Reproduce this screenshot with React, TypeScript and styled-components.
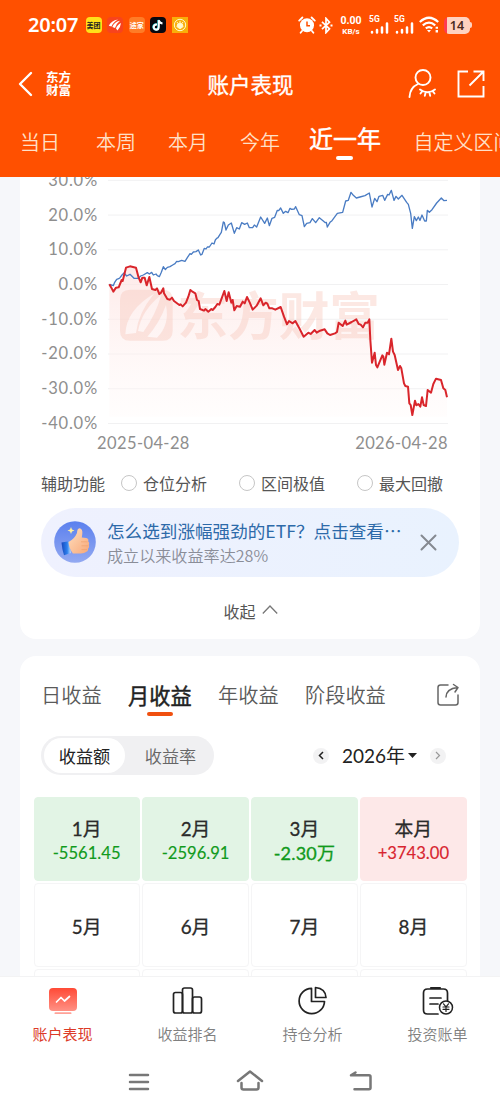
import React from 'react';
import styled, { createGlobalStyle } from 'styled-components';

const GlobalStyle = createGlobalStyle`
  * { box-sizing: border-box; }
  body {
    margin: 0;
    background: #f6f7fa;
    font-family: 'Noto Sans CJK SC', sans-serif;
    color: #2b2b2b;
    overflow: hidden;
  }
  svg { display: block; flex: none; }
`;

const Screen = styled.div`
  width: 500px;
  height: 1111px;
  display: flex;
  flex-direction: column;
  overflow: hidden;
`;

/* ---------- header ---------- */

const Header = styled.header`
  flex: none;
  height: 177px;
  background: #ff5000;
  color: #fff;
  display: flex;
  flex-direction: column;
`;

const StatusBar = styled.div`
  height: 50px;
  padding: 0 28px 0 28px;
  display: flex;
  align-items: center;
  justify-content: space-between;
`;

const StatusGroup = styled.div<{ $gap: number }>`
  display: flex;
  align-items: center;
  gap: ${(p) => p.$gap}px;
`;

const Clock = styled.span`
  font: 600 20px/24px 'Noto Sans', sans-serif;
  width: 51px;
  letter-spacing: -0.2px;
  margin-right: 1px;
`;

const AppBadge = styled.span<{ $bg: string; $color?: string; $square?: boolean }>`
  width: 16px;
  height: 16px;
  border-radius: ${(p) => (p.$square ? 0 : 4)}px;
  background: ${(p) => p.$bg};
  color: ${(p) => p.$color || '#fff'};
  font-size: 7px;
  line-height: 16px;
  font-weight: 700;
  text-align: center;
  display: flex;
  align-items: center;
  justify-content: center;
  white-space: nowrap;
`;

const NetSpeed = styled.div`
  display: flex;
  flex-direction: column;
  align-items: center;
  font: 700 8px/9px Roboto, sans-serif;
  width: 22px;
  margin: 0 4px 0 4px;
  span:first-child {
    font-size: 10.5px;
    line-height: 12px;
  }
`;

const TitleBar = styled.div`
  height: 68px;
  padding: 0 15px 0 18px;
  display: grid;
  grid-template-columns: 1fr auto 1fr;
  align-items: center;
`;

const TitleSide = styled.div<{ $end?: boolean }>`
  display: flex;
  align-items: center;
  justify-content: ${(p) => (p.$end ? 'flex-end' : 'flex-start')};
  gap: ${(p) => (p.$end ? 20 : 13)}px;
`;

const Brand = styled.span`
  font-weight: 700;
  font-size: 12.5px;
  line-height: 13.5px;
  width: 26px;
  margin-top: -2px;
`;

const Title = styled.h1`
  margin: 0 2px 0 0;
  font-size: 21.5px;
  line-height: 30px;
  font-weight: 400;
  -webkit-text-stroke: 0.35px currentColor;
`;

const PeriodTabs = styled.nav`
  height: 59px;
  padding: 0 0 0 20px;
  display: flex;
  white-space: nowrap;
`;

const PeriodTab = styled.span<{ $active?: boolean; $w: number }>`
  flex: none;
  width: ${(p) => p.$w}px;
  font-size: ${(p) => (p.$active ? 24 : 20)}px;
  line-height: ${(p) => (p.$active ? 40 : 47)}px;
  font-weight: ${(p) => (p.$active ? 400 : 350)};
  -webkit-text-stroke: ${(p) => (p.$active ? 0.45 : 0)}px currentColor;
  color: ${(p) => (p.$active ? '#fff' : '#ffe0c8')};
  &::after {
    content: '';
    display: ${(p) => (p.$active ? 'block' : 'none')};
    width: 17px;
    height: 4px;
    margin: -2px 0 0 27px;
    border-radius: 2px;
    background: #fff;
  }
`;

/* ---------- cards ---------- */

const Content = styled.main`
  flex: 1;
  min-height: 0;
  overflow: hidden;
  padding: 0 20px;
  display: flex;
  flex-direction: column;
  gap: 17px;
`;

const Card = styled.section<{ $h: number; $first?: boolean }>`
  flex: none;
  height: ${(p) => p.$h}px;
  background: #fff;
  border-radius: ${(p) => (p.$first ? '0 0 16px 16px' : '16px 16px 0 0')};
  overflow: hidden;
`;

const ChartRow = styled.div`
  display: flex;
  height: 248px;
`;

const YAxis = styled.div`
  width: 78px;
  margin-top: -14px;
  margin-right: 10px;
  display: flex;
  flex-direction: column;
  text-align: right;
`;

const AxisText = styled.span<{ $spacing?: number }>`
  font: 400 16.5px/34.7px Lato, sans-serif;
  height: 34.7px;
  letter-spacing: ${(p) => p.$spacing ?? 0.4}px;
  color: #8e8e8e;
`;

const XAxis = styled.div`
  display: flex;
  justify-content: space-between;
  padding: 0 32px 0 77px;
  margin-top: 1px;
`;

const ToolRow = styled.div`
  height: 24px;
  margin-top: 10px;
  padding-left: 21px;
  display: flex;
  align-items: center;
  font-size: 16px;
  line-height: 24px;
  color: #555;
`;

const Option = styled.label<{ $ml: number }>`
  display: flex;
  align-items: center;
  gap: 6px;
  margin-left: ${(p) => p.$ml}px;
`;

const Radio = styled.i`
  width: 16px;
  height: 16px;
  border: 1.3px solid #c6c6c6;
  border-radius: 50%;
`;

const Banner = styled.div`
  margin: 13px 21px 0;
  height: 69px;
  border-radius: 35px;
  background: linear-gradient(90deg, #eff1fe, #e9f2fe);
  padding: 0 22px 0 13px;
  display: flex;
  align-items: center;
`;

const BannerText = styled.div`
  margin-left: 11px;
  padding-top: 1px;
  flex: 1;
  display: flex;
  flex-direction: column;
  white-space: nowrap;
`;

const BannerTitle = styled.span`
  font-size: 17.6px;
  line-height: 25px;
  color: #2d6aa9;
`;

const BannerSub = styled.span`
  font-size: 16.1px;
  line-height: 24px;
  font-weight: 350;
  color: #8a8d98;
`;

const Collapse = styled.div`
  margin-top: 22px;
  display: flex;
  align-items: center;
  justify-content: center;
  gap: 6px;
  padding-left: 1px;
  font-size: 16px;
  line-height: 24px;
  color: #555;
`;

/* ---------- earnings card ---------- */

const EarnTabs = styled.div`
  height: 56px;
  padding: 23px 20px 0 21px;
  display: flex;
  justify-content: space-between;
`;

const EarnTabList = styled.div`
  display: flex;
`;

const EarnTab = styled.span<{ $active?: boolean; $w: number }>`
  width: ${(p) => p.$w}px;
  font-size: ${(p) => (p.$active ? 21.2 : 20.2)}px;
  line-height: 32px;
  font-weight: ${(p) => (p.$active ? 400 : 350)};
  -webkit-text-stroke: ${(p) => (p.$active ? 0.45 : 0)}px currentColor;
  color: ${(p) => (p.$active ? '#222' : '#5a5a5a')};
  white-space: nowrap;
  &::after {
    content: '';
    display: ${(p) => (p.$active ? 'block' : 'none')};
    width: 26px;
    height: 4px;
    margin: 1px 0 0 19px;
    border-radius: 2px;
    background: #f0500f;
  }
`;

const ShareIcon = styled.svg`
  margin-top: 4px;
`;

const Controls = styled.div`
  margin-top: 24px;
  padding: 0 34px 0 21px;
  display: flex;
  align-items: center;
  justify-content: space-between;
`;

const Segmented = styled.div`
  width: 173px;
  height: 39px;
  padding: 2px 3px;
  border-radius: 20px;
  background: #f0f0f2;
  display: flex;
`;

const Segment = styled.span<{ $active?: boolean }>`
  flex: ${(p) => (p.$active ? '0 0 81px' : '1')};
  border-radius: 18px;
  background: ${(p) => (p.$active ? '#fff' : 'transparent')};
  color: ${(p) => (p.$active ? '#222' : '#666')};
  font-size: 17.2px;
  line-height: 36px;
  padding-left: ${(p) => (p.$active ? 0 : 5)}px;
  font-weight: ${(p) => (p.$active ? 400 : 350)};
  text-align: center;
`;

const YearPicker = styled.div`
  display: flex;
  align-items: center;
`;

const RoundButton = styled.span`
  width: 16px;
  height: 16px;
  border-radius: 50%;
  background: #f2f2f3;
  display: flex;
  align-items: center;
  justify-content: center;
`;

const Year = styled.span`
  margin: 0 13px 0 13px;
  display: flex;
  align-items: center;
  gap: 3px;
  font: 400 19px/28px Lato, 'Noto Sans CJK SC', sans-serif;
  color: #222;
`;

const MonthGrid = styled.div`
  margin: 22px 13.5px 0;
  display: grid;
  grid-template-columns: repeat(4, 1fr);
  grid-auto-rows: 84px;
  gap: 2px 2.7px;
`;

type Tone = 'loss' | 'gain' | 'none';
const toneBg = { loss: '#e2f4e5', gain: '#fde8e8', none: '#fff' };

const MonthCell = styled.div<{ $tone: Tone }>`
  border-radius: 4px;
  background: ${(p) => toneBg[p.$tone]};
  border: 1px solid ${(p) => (p.$tone === 'none' ? '#f5f5f6' : toneBg[p.$tone])};
  padding-top: 2px;
  display: flex;
  flex-direction: column;
  align-items: center;
  justify-content: center;
`;

const MonthName = styled.span`
  font: 400 18.8px/25px Lato, 'Noto Sans CJK SC', sans-serif;
  -webkit-text-stroke: 0.3px currentColor;
  color: #2a2a2a;
`;

const MonthValue = styled.span<{ $tone: Tone; $big?: boolean }>`
  font: 400 ${(p) => (p.$big ? 18 : 16.6)}px/24px Lato, 'Noto Sans CJK SC', sans-serif;
  -webkit-text-stroke: ${(p) => (p.$big ? 0.35 : 0.15)}px currentColor;
  color: ${(p) => (p.$tone === 'loss' ? '#119a1c' : '#d8242f')};
  letter-spacing: ${(p) => (p.$big ? 0.2 : 0)}px;
`;

/* ---------- bottom ---------- */

const BottomBar = styled.nav`
  flex: none;
  height: 76px;
  background: #fff;
  border-top: 1px solid #f3f3f4;
  display: grid;
  grid-template-columns: repeat(4, 1fr);
`;

const BottomItem = styled.div<{ $active?: boolean }>`
  padding-top: 8px;
  display: flex;
  flex-direction: column;
  align-items: center;
  gap: 6px;
  font-size: 15px;
  line-height: 22px;
  font-weight: ${(p) => (p.$active ? 400 : 350)};
  color: ${(p) => (p.$active ? '#dc3a28' : '#808080')};
`;

const SystemBar = styled.div`
  flex: none;
  height: 59px;
  padding: 0 127px 0 127px;
  background: #fff;
  display: flex;
  justify-content: space-between;
`;

/* ---------- data ---------- */

const BENCHMARK =
  '268,328 274,330 280,332 284,322 290,313 296,311 300,308 306,300 312,294 320,303 330,298 336,304 342,310 355,310 362,303 370,300 382,293 388,297 395,292 400,300 408,297 412,302 418,305 424,292 430,275 436,284 442,277 450,275 458,270 465,266 470,259 475,260 485,256 495,259 502,248 510,236 514,238 520,231 528,230 535,225 542,240 546,238 553,220 558,222 562,216 568,216 576,204 582,207 586,195 590,190 594,188 600,178 604,172 610,141 613,143 618,165 625,150 634,144 643,175 650,158 658,162 665,143 674,148 682,144 688,158 698,158 703,150 710,156 722,126 734,145 742,129 748,152 756,130 764,127 772,106 776,107 782,99 790,115 797,109 804,113 810,100 815,103 823,102 827,95 838,119 846,122 853,155 860,145 870,143 877,131 887,143 898,128 909,137 916,143 919,142 922,156 930,142 936,137 952,115 968,112 977,78 985,76 993,52 1000,61 1009,69 1020,66 1035,62 1048,54 1056,96 1064,70 1071,80 1077,64 1088,61 1094,76 1103,58 1107,60 1114,46 1122,76 1128,64 1135,72 1146,61 1160,82 1165,88 1172,115 1177,160 1183,125 1189,137 1195,126 1200,136 1206,120 1214,138 1219,138 1222,106 1228,112 1236,104 1250,84 1264,69 1272,77 1281,76';

const ACCOUNT =
  '268,328 274,338 280,350 288,338 296,337 305,315 308,318 318,278 330,274 348,278 356,308 362,322 367,308 374,308 380,331 388,306 396,342 406,345 411,340 418,357 423,353 430,340 432,355 442,372 450,374 456,368 462,378 478,390 482,388 488,394 498,383 505,365 511,345 516,349 526,355 531,375 536,378 540,402 552,407 556,402 565,410 574,402 578,405 586,396 592,387 598,389 605,370 613,348 620,378 626,352 634,383 638,375 643,406 650,393 660,395 668,380 674,385 681,366 689,382 698,404 710,392 722,370 730,391 737,383 742,386 748,400 757,400 766,404 782,396 792,425 801,448 807,438 818,445 826,438 838,460 851,485 865,473 872,477 884,465 890,473 900,467 914,463 922,475 930,480 945,475 951,471 956,443 968,453 976,437 980,449 995,441 1009,433 1016,447 1022,449 1029,457 1036,443 1043,443 1048,433 1051,495 1056,563 1064,533 1068,570 1072,577 1087,541 1090,545 1093,569 1101,533 1107,538 1114,491 1119,530 1124,540 1134,585 1140,573 1144,580 1152,625 1156,633 1164,635 1168,685 1172,690 1177,720 1185,677 1189,691 1195,687 1201,695 1206,667 1211,690 1218,693 1223,645 1233,653 1240,627 1248,611 1263,615 1270,640 1276,645 1281,667';

const LEVELS = ['30.0%', '20.0%', '10.0%', '0.0%', '-10.0%', '-20.0%', '-30.0%', '-40.0%'];

const MONTHS: { name?: string; value?: string; tone: Tone; big?: boolean }[] = [
  { name: '1月', value: '-5561.45', tone: 'loss' },
  { name: '2月', value: '-2596.91', tone: 'loss' },
  { name: '3月', value: '-2.30万', tone: 'loss', big: true },
  { name: '本月', value: '+3743.00', tone: 'gain' },
  { name: '5月', tone: 'none' },
  { name: '6月', tone: 'none' },
  { name: '7月', tone: 'none' },
  { name: '8月', tone: 'none' },
  { tone: 'none' },
  { tone: 'none' },
  { tone: 'none' },
  { tone: 'none' },
];

/* ---------- drawings ---------- */

const Chart = () => (
  <svg width="340" height="248" viewBox="264 6 1020 744">
    <defs>
      <linearGradient id="area" x1="0" y1="274" x2="0" y2="725" gradientUnits="userSpaceOnUse">
        <stop offset="0" stopColor="#fde3e1" stopOpacity=".75" />
        <stop offset="1" stopColor="#fff8f7" stopOpacity=".3" />
      </linearGradient>
    </defs>
    {LEVELS.map((l, i) => (
      <line key={l} x1="264" x2="1284" y1={16 + i * 104.2} y2={16 + i * 104.2} stroke="#f1f1f2" strokeWidth="3" />
    ))}
    <polygon points={`268,725 ${ACCOUNT} 1281,725`} fill="url(#area)" />
    <g fill="#f8c9bd" opacity=".42">
      <path
        fillRule="evenodd"
        d="M330 344h98q30 0 30 30v93q0 30-30 30h-98q-30 0-30-30v-93q0-30 30-30ZM316 478Q318 405 402 356Q354 415 348 474ZM354 468Q365 405 424 359Q407 420 370 471ZM382 485Q417 447 438 390Q450 450 411 488Z"
      />
      <text x="472" y="479" fontSize="152" fontWeight="700" fontFamily="'Noto Sans CJK SC', sans-serif">
        东方财富
      </text>
    </g>
    <polyline points={BENCHMARK} fill="none" stroke="#4a7cc3" strokeWidth="4" strokeLinejoin="round" />
    <polyline points={ACCOUNT} fill="none" stroke="#d9252b" strokeWidth="6" strokeLinejoin="round" />
  </svg>
);

const Alarm = () => (
  <svg width="18" height="18" viewBox="0 0 18 18">
    <circle cx="9" cy="9.3" r="7" fill="#fff" />
    <path d="M1.2 4.6 4.4 1.5M16.8 4.6 13.6 1.5M4 15l-1.4 1.8M14 15l1.4 1.8" stroke="#fff" strokeWidth="1.8" strokeLinecap="round" />
    <path d="M9 5.5v4.2h3" fill="none" stroke="#ff5000" strokeWidth="1.5" />
  </svg>
);

const Bluetooth = () => (
  <svg width="14" height="17" viewBox="0 0 14 17" fill="none" stroke="#fff" strokeWidth="1.7">
    <path d="m3 4.8 7.5 7L7 15.6V1.4l3.5 3.8-7.5 7" />
    <path d="M.5 8.5h2M11.5 8.5h2" strokeWidth="2" />
  </svg>
);

const SignalWrap = styled.div`
  width: 20px;
  height: 18px;
  display: flex;
  flex-direction: column;
  font: 700 8.5px/7px Roboto, sans-serif;
  margin-right: 2px;
  svg {
    margin-top: -1px;
    align-self: flex-end;
  }
`;

const Signal = () => (
  <SignalWrap>
    5G
    <svg width="19" height="12" viewBox="0 0 19 12" stroke="#fff" strokeWidth="2.5" strokeLinecap="round">
      <path d="M2 10v.6M7 8v2.6M12 5.5v5.1M17 1.500v9.1" />
    </svg>
  </SignalWrap>
);

const Wifi = () => (
  <svg width="21" height="18" viewBox="0 0 21 18" fill="none" stroke="#fff" strokeWidth="2.2">
    <path d="M.8 6q9.2-8.5 18.4 0M3.8 9.3q6.2-5.4 12.4 0M6.8 12.4q3.2-2.6 6.4 0" />
    <path d="m8 14 2 2.4 2-2.4z" fill="#fff" stroke="none" />
    <path d="M17.8 10.8v2M17.8 14v2.6" strokeWidth="2.4" />
  </svg>
);

const BatteryBox = styled.div`
  width: 26px;
  height: 17px;
  border-radius: 5px;
  background: linear-gradient(90deg, #ff3b50 0 3px, #ffd2c0 3px);
  color: #4a2a20;
  font: 600 12.5px/17px 'Noto Sans', sans-serif;
  text-align: center;
  margin-left: 1px;
`;

const BatteryTip = styled.i`
  width: 2px;
  height: 6px;
  background: #ffd2c0;
  border-radius: 0 2px 2px 0;
  margin-left: -3px;
`;

const Thumb = () => (
  <svg width="42" height="42" viewBox="0 0 42 42">
    <defs>
      <linearGradient id="disc" x1="0" y1="0" x2="0" y2="1">
        <stop offset="0" stopColor="#5b80ee" />
        <stop offset="1" stopColor="#93a9f1" />
      </linearGradient>
      <linearGradient id="skin" x1="0" y1="0" x2="1" y2="1">
        <stop offset="0" stopColor="#ffdfc0" />
        <stop offset="1" stopColor="#f7a878" />
      </linearGradient>
      <linearGradient id="cuff" x1="0" y1="0" x2="1" y2="0">
        <stop offset="0" stopColor="#1849bd" />
        <stop offset=".6" stopColor="#2c80ed" />
        <stop offset="1" stopColor="#bfe0ff" />
      </linearGradient>
    </defs>
    <circle cx="21" cy="21" r="20.8" fill="url(#disc)" />
    <path d="m7.500 21.500 7.500-1.200 2 11.700-7 2.200q-2-6-2.500-12.700Z" fill="url(#cuff)" />
    <path
      d="M14.500 21q6-3 8.500-9 .2-4.500 2.400-4.800 3.600.4 2.900 5.800l-.5 3.500 4.500.5q2.800.8 1.900 3.300 1.800 1.500.6 3.600 1 2.100-.6 3.600.2 2.600-2.200 3.400-1.400 1.300-5.100 1.600h-8q-4-5.500-4.400-11.500Z"
      fill="url(#skin)"
    />
    <path d="M27 20.800h6.500M27.500 24.800h6.500M27.500 28.600h5.500" stroke="#ee9c66" strokeWidth=".6" />
    <path d="m17 6 1 2.500 2.500 1-2.500 1-1 2.500-1-2.500-2.500-1 2.500-1Z" fill="#fff0a0" />
  </svg>
);

const Swoosh = () => (
  <svg width="14" height="14" viewBox="0 0 14 14" fill="#fff">
    <path d="M.8 7.800Q3 2.800 10 1.600Q5 4.500 3.500 8.500ZM4.300 9Q6 4 12 2.800Q8 6 7 10ZM8 10.500Q9 7 13 5Q12.500 9.500 9.500 12.500Z" />
  </svg>
);

const TikTok = () => (
  <svg width="12" height="13" viewBox="0 0 12 13" fill="none" strokeWidth="1.9">
    <path d="M5 5.500Q2 5.300 1.700 8.200 2 10.800 4.500 10.800 6.800 10.600 6.800 8V1.200Q7.500 4 10.500 4.500" stroke="#2bd9e0" transform="translate(-.5 -.3)" />
    <path d="M5 5.500Q2 5.300 1.700 8.200 2 10.800 4.500 10.800 6.800 10.600 6.800 8V1.200Q7.500 4 10.500 4.500" stroke="#fff" />
  </svg>
);

const Coin = () => (
  <svg width="14" height="14" viewBox="0 0 14 14" fill="none" stroke="#fff8cf">
    <circle cx="7" cy="7" r="5.700" strokeWidth="1" />
    <path d="M4 8.500Q4 5.200 7 5.200T10 8.500Q8.500 10.500 7 10.500T4 8.500Z" fill="#fff8cf" />
    <path d="m4 4 1 1.500M7 3v2M10 4 9 5.500" />
  </svg>
);

const App = () => (
  <Screen>
    <GlobalStyle />
    <Header>
      <StatusBar>
        <StatusGroup $gap={5.6}>
          <Clock>20:07</Clock>
          <AppBadge $bg="#ffe11a" $color="#222">美团</AppBadge>
          <AppBadge $bg="#f8431d"><Swoosh /></AppBadge>
          <AppBadge $bg="#ff7c26">途家</AppBadge>
          <AppBadge $bg="#08080f"><TikTok /></AppBadge>
          <AppBadge $bg="#f9ae0a" $square><Coin /></AppBadge>
        </StatusGroup>
        <StatusGroup $gap={3}>
          <Alarm />
          <Bluetooth />
          <NetSpeed><span>0.00</span><span>KB/s</span></NetSpeed>
          <Signal />
          <Signal />
          <Wifi />
          <BatteryBox>14</BatteryBox>
          <BatteryTip />
        </StatusGroup>
      </StatusBar>
      <TitleBar>
        <TitleSide>
          <svg width="15" height="26" viewBox="0 0 15 26" fill="none" stroke="#fff" strokeWidth="2.4" strokeLinecap="round" strokeLinejoin="round">
            <path d="M13 2 2 13l11 11" />
          </svg>
          <Brand>东方财富</Brand>
        </TitleSide>
        <Title>账户表现</Title>
        <TitleSide $end>
          <svg width="30" height="30" viewBox="0 0 30 30" fill="none" stroke="#fff" strokeWidth="1.9" strokeLinecap="round">
            <circle cx="16" cy="8.500" r="7.500" />
            <path d="M2.500 28Q3 18.500 11 15" />
            <path d="M13 20.500q7.500 5.500 15 0M15 22.500l-1.500 2M18.500 24l-.7 2.800M22.500 24l.7 2.800M26 22.500l1.500 2" />
          </svg>
          <svg width="28" height="28" viewBox="0 0 28 28" fill="none" stroke="#fff" strokeWidth="1.9">
            <path d="M11 1.500H1.500v25h25V16M16.500 1.500h10V11M26.500 1.500 12.500 15.500" />
          </svg>
        </TitleSide>
      </TitleBar>
      <PeriodTabs>
        <PeriodTab $w={76}>当日</PeriodTab>
        <PeriodTab $w={72}>本周</PeriodTab>
        <PeriodTab $w={72}>本月</PeriodTab>
        <PeriodTab $w={69}>今年</PeriodTab>
        <PeriodTab $w={104.5} $active>近一年</PeriodTab>
        <PeriodTab $w={110}>自定义区间</PeriodTab>
      </PeriodTabs>
    </Header>

    <Content>
      <Card $h={462} $first>
        <ChartRow>
          <YAxis>
            {LEVELS.map((l) => (
              <AxisText key={l} $spacing={0.8}>{l}</AxisText>
            ))}
          </YAxis>
          <Chart />
        </ChartRow>
        <XAxis>
          <AxisText>2025-04-28</AxisText>
          <AxisText>2026-04-28</AxisText>
        </XAxis>
        <ToolRow>
          辅助功能
          <Option $ml={16}><Radio />仓位分析</Option>
          <Option $ml={32}><Radio />区间极值</Option>
          <Option $ml={32}><Radio />最大回撤</Option>
        </ToolRow>
        <Banner>
          <Thumb />
          <BannerText>
            <BannerTitle>怎么选到涨幅强劲的ETF？点击查看⋯</BannerTitle>
            <BannerSub>成立以来收益率达28%</BannerSub>
          </BannerText>
          <svg width="17" height="17" viewBox="0 0 17 17" stroke="#858991" strokeWidth="2" strokeLinecap="round">
            <path d="m1.500 1.500 14 14M15.500 1.500l-14 14" />
          </svg>
        </Banner>
        <Collapse>
          收起
          <svg width="16" height="14" viewBox="0 0 16 14" fill="none" stroke="#777" strokeWidth="1.3">
            <path d="m.8 9.500 7.200-7.500 7.200 7.500" />
          </svg>
        </Collapse>
      </Card>

      <Card $h={400}>
        <EarnTabs>
          <EarnTabList>
            <EarnTab $w={87}>日收益</EarnTab>
            <EarnTab $w={90} $active>月收益</EarnTab>
            <EarnTab $w={87}>年收益</EarnTab>
            <EarnTab $w={84}>阶段收益</EarnTab>
          </EarnTabList>
          <ShareIcon width="24" height="24" viewBox="0 0 24 24" fill="none" stroke="#666" strokeWidth="1.5" strokeLinecap="round" strokeLinejoin="round">
            <path d="M12 2H4.500Q2 2 2 4.500v15Q2 22 4.500 22h15q2.500 0 2.500-2.500V12" />
            <path d="M10 14Q10.500 5.500 21.500 4.500M17.500 1.500l4.500 3-3 4.500" />
          </ShareIcon>
        </EarnTabs>
        <Controls>
          <Segmented>
            <Segment $active>收益额</Segment>
            <Segment>收益率</Segment>
          </Segmented>
          <YearPicker>
            <RoundButton>
              <svg width="6" height="9" viewBox="0 0 6 9" fill="none" stroke="#222" strokeWidth="1.5"><path d="M5 1 1.500 4.500 5 8" /></svg>
            </RoundButton>
            <Year>
              2026年
              <svg width="9" height="5" viewBox="0 0 9 5" fill="#222"><path d="M0 0h9L4.500 5z" /></svg>
            </Year>
            <RoundButton>
              <svg width="6" height="9" viewBox="0 0 6 9" fill="none" stroke="#999" strokeWidth="1.2"><path d="M1 1l3.500 3.500L1 8" /></svg>
            </RoundButton>
          </YearPicker>
        </Controls>
        <MonthGrid>
          {MONTHS.map((m, i) => (
            <MonthCell key={i} $tone={m.tone}>
              {m.name && <MonthName>{m.name}</MonthName>}
              {m.value && <MonthValue $tone={m.tone} $big={m.big}>{m.value}</MonthValue>}
            </MonthCell>
          ))}
        </MonthGrid>
      </Card>
    </Content>

    <BottomBar>
      <BottomItem $active>
        <svg width="32" height="32" viewBox="0 0 32 32">
          <defs>
            <linearGradient id="screen" x1="0" y1="0" x2="0" y2="1">
              <stop offset="0" stopColor="#ff4a36" />
              <stop offset="1" stopColor="#ff9185" />
            </linearGradient>
          </defs>
          <rect x="2" y="3" width="28" height="23" rx="4" fill="url(#screen)" />
          <rect x="7.500" y="27.200" width="17" height="1.900" rx=".9" fill="#ffa298" />
          <path d="m9.500 17 4.500-4.500 3.500 3.500 5-4.500" fill="none" stroke="#fff" strokeWidth="1.7" strokeLinecap="round" strokeLinejoin="round" />
        </svg>
        账户表现
      </BottomItem>
      <BottomItem>
        <svg width="32" height="32" viewBox="0 0 32 32" fill="none" stroke="#222" strokeWidth="1.7">
          <rect x="1.500" y="7.500" width="9" height="20.500" rx="2" />
          <rect x="10.500" y="3" width="10" height="25" rx="2" />
          <rect x="20.500" y="12" width="9" height="16" rx="2" />
        </svg>
        收益排名
      </BottomItem>
      <BottomItem>
        <svg width="32" height="32" viewBox="0 0 32 32" fill="none" stroke="#222" strokeWidth="1.7" strokeLinejoin="round">
          <path d="M14.500 3.300A12.700 12.700 0 1 0 27.500 16.500H14.500Z" />
          <path d="M18.500 2.500V12.500H29Q28.500 3.500 18.500 2.500Z" />
        </svg>
        持仓分析
      </BottomItem>
      <BottomItem>
        <svg width="32" height="32" viewBox="0 0 32 32" fill="none" stroke="#222" strokeWidth="1.7" strokeLinecap="round">
          <path d="M16 29H5.500Q1.500 29 1.500 25V8Q1.500 4 5.500 4h16q4 0 4 4v8" />
          <path d="M9 3h9" strokeWidth="2.2" />
          <path d="M8 13h11M8 19h8" />
          <circle cx="24" cy="22.500" r="6.500" fill="#fff" strokeWidth="1.5" />
          <path d="m21.500 18.800 2.500 3 2.500-3M24 21.800v4.700M21 22h6M21 24.300h6" strokeWidth="1.2" />
        </svg>
        投资账单
      </BottomItem>
    </BottomBar>
    <SystemBar>
      <svg width="24" height="59" viewBox="0 0 24 59" stroke="#777" strokeWidth="2.5" strokeLinecap="round">
        <path d="M3 23h18M3 30h18M3 37h18" />
      </svg>
      <svg width="28" height="59" viewBox="0 0 28 59" fill="none" stroke="#777" strokeWidth="2.5" strokeLinecap="round" strokeLinejoin="round">
        <path d="m2 29 12-9.500L26 29M5.500 31v4.500q0 2 2 2h13q2 0 2-2V31" />
      </svg>
      <svg width="24" height="59" viewBox="0 0 24 59" fill="none" stroke="#777" strokeWidth="2.5" strokeLinecap="round" strokeLinejoin="round">
        <path d="M6.500 20.500 2 23.300h18q1.500 0 1.500 1.500v11q0 1.500-1.500 1.500H5.500" />
      </svg>
    </SystemBar>
  </Screen>
);

export default App;
